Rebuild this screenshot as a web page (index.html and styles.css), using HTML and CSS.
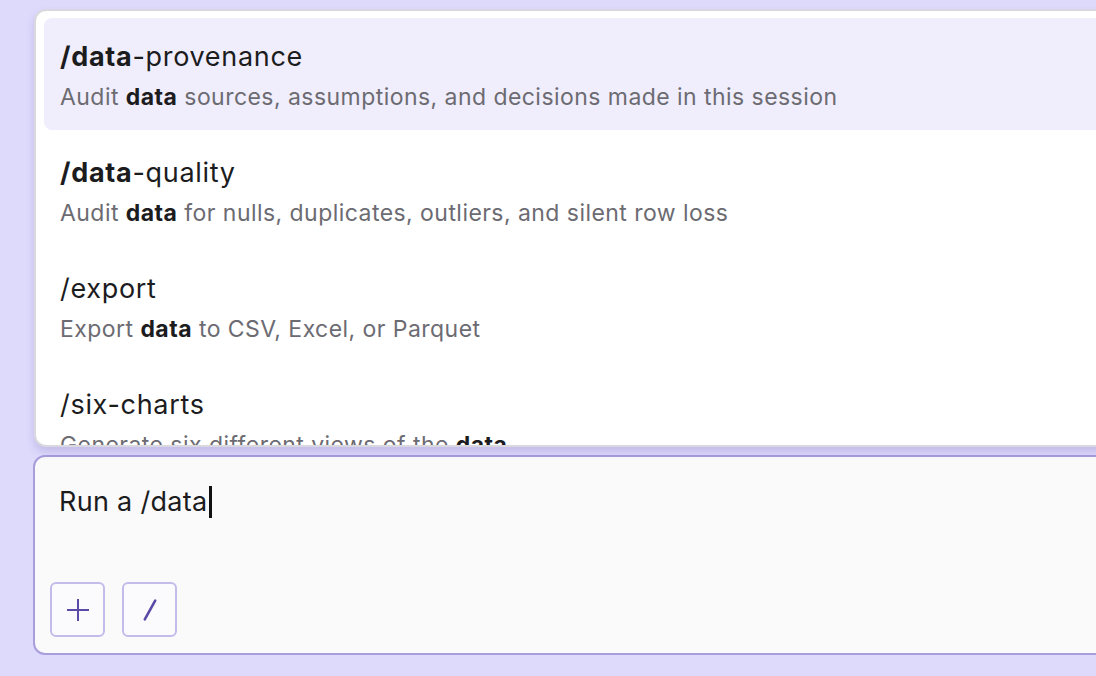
FILE: index.html
```html
<!DOCTYPE html>
<html lang="en">
<head>
    <meta charset="UTF-8">
    <meta name="viewport" content="width=device-width, initial-scale=1.0">
    <title>Command Menu</title>
    <link rel="stylesheet" href="styles.css">
</head>
<body>
    <div class="app">
        <!-- SLASH COMMAND SUGGESTIONS -->
        <div class="menu">
            <div class="item active">
                <div class="cmd"><b>/data</b>-provenance</div>
                <div class="desc">Audit <b>data</b> sources, assumptions, and decisions made in this session</div>
            </div>
            <div class="item">
                <div class="cmd"><b>/data</b>-quality</div>
                <div class="desc">Audit <b>data</b> for nulls, duplicates, outliers, and silent row loss</div>
            </div>
            <div class="item">
                <div class="cmd">/export</div>
                <div class="desc">Export <b>data</b> to CSV, Excel, or Parquet</div>
            </div>
            <div class="item">
                <div class="cmd">/six-charts</div>
                <div class="desc">Generate six different views of the <b>data</b></div>
            </div>
        </div>
        <!-- COMPOSER -->
        <div class="composer">
            <div class="input">Run a /data<span class="caret"></span></div>
            <div class="tools">
                <button class="tool" title="Attach">
                    <svg width="24" height="24" viewBox="0 0 24 24"><path d="M12 1v22M1 12h22" stroke="#5b4aa6" stroke-width="2" fill="none"/></svg>
                </button>
                <button class="tool" title="Commands">
                    <svg width="24" height="24" viewBox="0 0 24 24"><path d="M6.8 21.3L17.2 2.7" stroke="#5b4aa6" stroke-width="2.6" stroke-linecap="round" fill="none"/></svg>
                </button>
            </div>
        </div>
    </div>
</body>
</html>
```

FILE: styles.css
```css
body {
    font-family: Inter, 'Noto Sans', sans-serif;
    background-color: #dedafc;
    margin: 0;
    padding: 0;
    height: 676px;
    overflow: hidden;
}
.app {
    padding: 9px 0 0 33px;
    width: 1140px;
}
.menu {
    margin-left: 1px;
    height: 438px;
    box-sizing: border-box;
    background: #ffffff;
    border: 2px solid #d9d8de;
    border-radius: 12px;
    padding: 7px 8px;
    overflow: hidden;
    box-shadow: 0 5px 8px rgba(70, 50, 150, 0.18);
    position: relative;
    z-index: 1;
}
.item {
    height: 112px;
    box-sizing: border-box;
    padding: 25px 16px 0;
    border-radius: 8px;
    margin-bottom: 4px;
}
.item.active {
    background-color: #f0eefc;
}
.cmd {
    font-size: 27px;
    line-height: 28px;
    letter-spacing: 0.7px;
    color: #1c1c1e;
}
.cmd b {
    font-weight: 700;
}
.desc {
    font-size: 23px;
    line-height: 26px;
    letter-spacing: 0.45px;
    margin-top: 13px;
    color: #6c6b72;
}
.desc b {
    color: #1c1c1e;
    font-weight: 700;
}
.composer {
    margin-top: 8px;
    height: 200px;
    box-sizing: border-box;
    background: #fafafa;
    border: 2px solid #a99ddc;
    border-radius: 12px;
    padding: 29px 0 16px 15px;
    display: flex;
    flex-direction: column;
    justify-content: space-between;
}
.input {
    margin-left: 9px;
    font-size: 27px;
    line-height: 32px;
    letter-spacing: 0.3px;
    color: #1c1c1e;
    display: flex;
    align-items: center;
}
.caret {
    display: inline-block;
    width: 3px;
    height: 32px;
    margin-left: 1px;
    background: #111;
}
.tools {
    display: flex;
    gap: 17px;
}
.tool {
    width: 55px;
    height: 55px;
    box-sizing: border-box;
    border: 2px solid #c3bbea;
    border-radius: 6px;
    background: #fbfbfe;
    padding: 0;
    display: flex;
    align-items: center;
    justify-content: center;
    cursor: pointer;
}
```
